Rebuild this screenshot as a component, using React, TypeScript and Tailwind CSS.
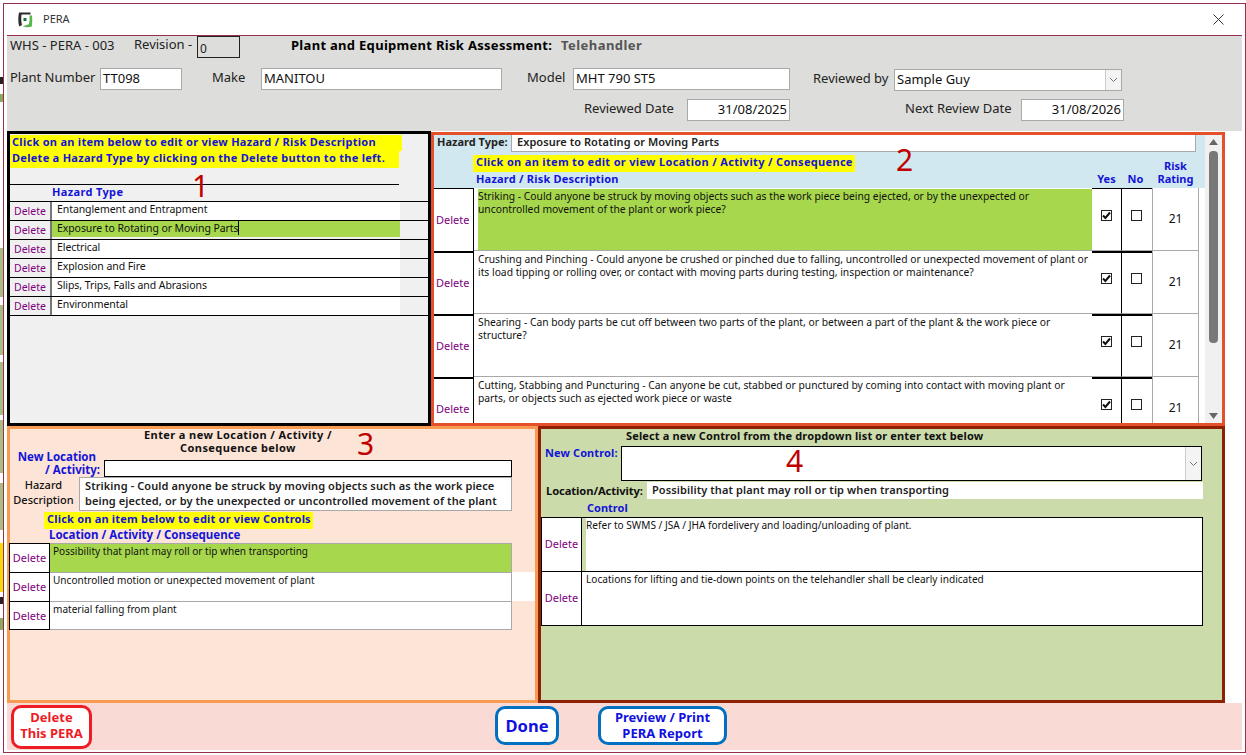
const font = "[font-family:'Noto_Sans',sans-serif]"

const hazards = [
  "Entanglement and Entrapment",
  "Exposure to Rotating or Moving Parts",
  "Electrical",
  "Explosion and Fire",
  "Slips, Trips, Falls and Abrasions",
  "Environmental",
]

const risks = [
  "Striking - Could anyone be struck by moving objects such as the work piece being ejected, or by the unexpected or\nuncontrolled movement of the plant or work piece?",
  "Crushing and Pinching - Could anyone be crushed or pinched due to falling, uncontrolled or unexpected movement of plant or\nits load tipping or rolling over, or contact with moving parts during testing, inspection or maintenance?",
  "Shearing - Can body parts be cut off between two parts of the plant, or between a part of the plant & the work piece or\nstructure?",
  "Cutting, Stabbing and Puncturing - Can anyone be cut, stabbed or punctured by coming into contact with moving plant or\nparts, or objects such as ejected work piece or waste",
]

const locations = [
  "Possibility that plant may roll or tip when transporting",
  "Uncontrolled motion or unexpected movement of plant",
  "material falling from plant",
]

const controls = [
  "Refer to SWMS / JSA / JHA fordelivery and loading/unloading of plant.",
  "Locations for lifting and tie-down points on the telehandler shall be clearly indicated",
]

function Field({ className, children }: { className: string; children?: React.ReactNode }) {
  return (
    <div className={`h-[22px] bg-white border border-[#a9a9a9] flex items-center px-[2px] text-[13px] text-[#111] ${className}`}>
      {children}
    </div>
  )
}

function Chevron() {
  return (
    <svg width="9" height="6" viewBox="0 0 9 6" fill="none" stroke="#777" strokeWidth="1">
      <path d="M1 1l3.5 3.5L8 1" />
    </svg>
  )
}

function Checkbox({ checked }: { checked?: boolean }) {
  return (
    <div className="w-[11px] h-[11px] border border-[#222] bg-white flex items-center justify-center">
      {checked && (
        <svg width="9" height="9" viewBox="0 0 9 9" fill="none" stroke="#111" strokeWidth="2">
          <path d="M1 4.5l2.4 2.5L8 1.5" />
        </svg>
      )}
    </div>
  )
}

function Arrow({ up }: { up?: boolean }) {
  return (
    <svg width="9" height="6" viewBox="0 0 9 6" fill="#666">
      <path d={up ? "M4.5 0L9 6H0z" : "M0 0h9L4.5 6z"} />
    </svg>
  )
}

export default function App() {
  return (
    <div className={`relative w-[1246px] h-[755px] overflow-hidden bg-white text-[#111] ${font}`}>
      <div className="flex">
        {/* bits of the window behind */}
        <div className="w-[3px] h-[755px] flex flex-col shrink-0">
          <div className="h-[77px]" />
          <div className="h-[7px] bg-[#222]" />
          <div className="h-[8px] bg-[#8aa860] mt-[10px]" />
          <div className="h-[146px]" />
          <div className="h-[49px] bg-[#a8bd84]" />
          <div className="h-[50px] bg-[#a8bd84] mt-[8px]" />
          <div className="h-[53px] bg-[#a8bd84] mt-[7px]" />
          <div className="h-[53px] bg-[#a8bd84] mt-[5px]" />
          <div className="h-[47px] bg-[#a8bd84] mt-[10px]" />
          <div className="h-[49px] bg-[#f5d90a] mt-[13px]" />
          <div className="h-[7px] bg-[#222] mt-[5px]" />
          <div className="h-[12px] bg-[#8aa860] mt-[14px]" />
        </div>

        <div className="mt-[3px] w-[1243px] h-[750px] border border-[#96304a] pr-[3px] pl-[3px]">
          {/* title bar */}
          <div className="h-[32px] border-b border-[#96304a] flex items-center pl-[10px] pr-[18px] pb-[1px]">
            <svg width="16" height="17" viewBox="0 0 16 17">
              <path d="M2 1.500H13.500V3.500H4.500C4 7 4.200 11 5 14L2.200 15.500C1 11 1 6 2 1.500z" fill="#2b2b2b" />
              <path d="M12.500 4.500H15C15.400 8 15.300 11.500 14.800 15.500 11.500 16.500 8.500 16.300 5.800 15.200L11.800 13.300C12.600 10.500 12.700 7.500 12.500 4.500z" fill="#56b84a" />
              <rect x="6.500" y="7" width="3" height="3" fill="#1f6b4a" />
            </svg>
            <span className="ml-[10px] text-[11px] text-[#333]">PERA</span>
            <svg className="ml-auto" width="11" height="11" viewBox="0 0 11 11" stroke="#333" strokeWidth="1">
              <path d="M.5.5l10 10M10.500.5l-10 10" />
            </svg>
          </div>

          {/* record header */}
          <div className="h-[95px] bg-[#dddddb] pl-[3px] text-[13px] text-[#222]">
            <div className="flex items-center h-[22px]">
              <span className="w-[124px] -mt-[3px]">WHS - PERA - 003</span>
              <span className="w-[63px] -mt-[5px]">Revision -</span>
              <div className="w-[43px] h-[22px] border border-[#222] pl-[2px] text-[12px] leading-[24px]">0</div>
              <span className="ml-[51px] w-[270px] font-bold text-[13px] tracking-[0.3px] text-black -mt-[3px]">Plant and Equipment Risk Assessment:</span>
              <span className="font-bold text-[13px] tracking-[0.45px] text-[#555] -mt-[3px]">Telehandler</span>
            </div>
            <div className="flex items-center mt-[10px]">
              <span className="w-[90px] -mt-[3px]">Plant Number</span>
              <Field className="w-[82px]">TT098</Field>
              <span className="ml-[30px] w-[49px] -mt-[3px]">Make</span>
              <Field className="w-[241px]">MANITOU</Field>
              <span className="ml-[25px] w-[46px] -mt-[3px]">Model</span>
              <Field className="w-[217px]">MHT 790 ST5</Field>
              <span className="ml-[23px] w-[81px] -mt-[1px]">Reviewed by</span>
              <Field className="w-[228px] !pr-0 justify-between translate-y-[1px]">
                Sample Guy
                <div className="w-[16px] h-[20px] bg-[#f4f4f4] border-l border-[#ccc] flex items-center justify-center">
                  <Chevron />
                </div>
              </Field>
            </div>
            <div className="flex items-center mt-[9px] pl-[574px]">
              <span className="w-[103px] -mt-[2px]">Reviewed Date</span>
              <Field className="w-[103px] justify-end">31/08/2025</Field>
              <span className="ml-[115px] w-[116px] -mt-[2px]">Next Review Date</span>
              <Field className="w-[103px] justify-end">31/08/2026</Field>
            </div>
          </div>

          {/* hazard types and hazard descriptions */}
          <div className="flex h-[295px]">
            <div className="relative w-[424px] border-[3px] border-black bg-[#f0f0f0] text-[10.500px]">
              <div className="pt-[1px] font-bold text-[#1414d8] text-[11px] tracking-[0.28px]">
                <div className="w-[392px] h-[16px] bg-[#ffff00] pl-[2px] leading-[14px] whitespace-nowrap">Click on an item below to edit or view Hazard / Risk Description</div>
                <div className="w-[389px] h-[17px] bg-[#ffff00] pl-[2px] leading-[14px] whitespace-nowrap">Delete a Hazard Type by clicking on the Delete button to the left.</div>
              </div>
              <div className="w-[389px] mt-[16px] border-t border-black" />
              <div className="h-[16px] pl-[42px] font-bold text-[11px] tracking-[0.35px] text-[#1414d8] leading-[14px]">Hazard Type</div>
              <div className="border-t border-black">
                {hazards.map((hazard, index) => (
                  <div key={index} className="flex h-[19px] border-b border-black">
                    <div className="w-[42px] bg-[#f0f0f0] border-r-2 border-[#777] flex items-center justify-center text-[#800080] pt-[2px]">Delete</div>
                    <div className={`w-[348px] pl-[5px] leading-[14px] tracking-[-0.08px] ${index === 1 ? "bg-[#a6d74c] h-[16px]" : "bg-white"}`}>
                      {hazard}
                      {index === 1 && <span className="border-r border-black" />}
                    </div>
                  </div>
                ))}
              </div>
              <span className="absolute left-[182px] top-[37px] text-[30px] leading-[30px] text-[#c00000]">1</span>
            </div>

            <div className="relative w-[794px] h-[294px] mt-[1px] border-[3px] border-[#e4502a] flex bg-white text-[10.300px]">
              <div className="w-[771px] h-full overflow-hidden">
                <div className="bg-[#d2e8f0] h-[53px]">
                  <div className="flex h-[19px]">
                    <span className="w-[77px] pl-[3px] font-bold text-[11px] leading-[13px] text-[#222] whitespace-nowrap">Hazard Type:</span>
                    <div className="w-[685px] h-[18px] bg-white border-b border-r border-l border-[#a9a9a9] pl-[5px] font-semibold text-[11px] tracking-[0.05px] leading-[15px] -mt-[1px] text-[#222]">Exposure to Rotating or Moving Parts</div>
                  </div>
                  <div className="flex items-end h-[33px] font-bold text-[11px] text-[#1414d8]">
                    <div className="w-[658px] pl-[39px]">
                      <div className="w-[382px] h-[17px] bg-[#ffff00] pl-[3px] leading-[14px] tracking-[0.32px] whitespace-nowrap">Click on an item to edit or view Location / Activity / Consequence</div>
                      <div className="pl-[3px] h-[15px] leading-[14px] tracking-[0.2px]">Hazard / Risk Description</div>
                    </div>
                    <div className="w-[29px] text-center h-[15px] leading-[14px]">Yes</div>
                    <div className="w-[29px] text-center h-[15px] leading-[14px]">No</div>
                    <div className="w-[51px] text-center leading-[13px] pb-[2px]">Risk<br />Rating</div>
                  </div>
                </div>
                {risks.map((risk, index) => (
                  <div key={index} className="flex h-[63px]">
                    <div className={`w-[40px] bg-white border-r border-black flex items-center pl-[2px] text-[11px] text-[#800080] ${index === 0 ? "border-t border-black" : "border-t-2 border-black"}`}>Delete</div>
                    <div className="w-[618px] border-b border-[#a9a9a9] pl-[4px] pt-[1px]">
                      <div className={`h-full leading-[13px] pt-[1px] whitespace-pre-line ${index === 0 ? "bg-[#a6d74c]" : ""}`}>{risk}</div>
                    </div>
                    <div className={`w-[30px] border-b border-[#a9a9a9] border-r border-r-black flex justify-center ${index === 0 ? "border-t border-t-black pt-[21px]" : "border-t-2 border-t-black pt-[20px]"}`}>
                      <Checkbox checked />
                    </div>
                    <div className={`w-[30px] border-b border-[#a9a9a9] flex justify-center pr-[2px] ${index === 0 ? "border-t border-t-black pt-[21px]" : "border-t-2 border-t-black pt-[20px]"}`}>
                      <Checkbox />
                    </div>
                    <div className="w-[47px] border-x border-b border-[#a9a9a9] flex items-center justify-center text-[12px]">21</div>
                  </div>
                ))}
              </div>
              {/* scrollbar */}
              <div className="w-[17px] bg-[#f0f0f0] flex flex-col items-center py-[4px]">
                <Arrow up />
                <div className="w-[9px] h-[192px] bg-[#787878] rounded-[4px] mt-[6px]" />
                <div className="mt-auto"><Arrow /></div>
              </div>
              <span className="absolute left-[462px] top-[10px] text-[30px] leading-[30px] text-[#c00000]">2</span>
            </div>
          </div>

          {/* locations and controls */}
          <div className="flex h-[277px]">
            <div className="relative w-[531px] border-[3px] border-[#f79a52] bg-[#fce4d6] text-[10px]">
              <div className="w-[456px] h-[21px] -mt-[1px] mb-[1px] text-center font-bold text-[11px] tracking-[0.4px] leading-[13px] text-[#111]">
                Enter a new Location / Activity /<br />Consequence below
              </div>
              <div className="flex h-[27px]">
                <div className="w-[90px] text-right font-bold text-[#1414d8] text-[11.500px] leading-[13px] whitespace-nowrap">
                  <span className="pr-[4px]">New Location</span><br />/ Activity:
                </div>
                <div className="ml-[4px] w-[408px] h-[17px] self-end border border-black bg-white" />
              </div>
              <div className="flex h-[34px]">
                <div className="w-[67px] mr-[2px] text-center text-[11px] leading-[15px] font-medium">Hazard<br />Description</div>
                <div className="w-[433px] border border-[#a9a9a9] bg-white pl-[5px] font-semibold text-[11px] tracking-[0.1px] leading-[15px] text-[#222] whitespace-nowrap">
                  Striking - Could anyone be struck by moving objects such as the work piece<br />being ejected, or by the unexpected or uncontrolled movement of the plant
                </div>
              </div>
              <div className="ml-[34px] mt-[1px] w-[269px] h-[17px] bg-[#ffff00] pl-[3px] font-bold text-[#1414d8] text-[11px] leading-[14px] tracking-[0.2px] whitespace-nowrap">Click on an item below to edit or view Controls</div>
              <div className="h-[14px] pl-[39px] font-bold text-[#1414d8] text-[11.500px] leading-[11px] whitespace-nowrap">Location / Activity / Consequence</div>
              <div className="-ml-[1px]">
                {locations.map((location, index) => (
                  <div key={index} className="flex h-[29px]">
                    <div className={`w-[41px] border-l border-r border-black bg-white flex items-center justify-center text-[11px] text-[#800080] border-t ${index === 2 ? "border-b pt-[1px]" : ""}`}>Delete</div>
                    <div className={`w-[462px] border-t border-r border-[#a9a9a9] pl-[3px] leading-[14px] tracking-[0.03px] ${index === 0 ? "bg-[#a6d74c]" : "bg-white"} ${index === 2 ? "border-b" : ""}`}>{location}</div>
                    {index === 1 && <div className="w-[23px] bg-white" />}
                  </div>
                ))}
              </div>
              <span className="absolute left-[347px] top-[0px] text-[30px] leading-[30px] text-[#c00000]">3</span>
            </div>

            <div className="relative w-[687px] border-[3px] border-[#8f2100] bg-[#ccdbaa] text-[10.100px]">
              <div className="h-[14px] pl-[85px] font-bold text-[11px] tracking-[0.13px] leading-[13px] whitespace-nowrap">Select a new Control from the dropdown list or enter text below</div>
              <div className="flex mt-[3px]">
                <div className="w-[80px] pl-[4px] font-bold text-[#1414d8] text-[11px] tracking-[0.1px] leading-[14px] whitespace-nowrap">New Control:</div>
                <div className="w-[581px] h-[35px] border border-black bg-white flex justify-end">
                  <div className="w-[16px] bg-[#f4f4f4] border-l border-[#ccc] flex items-center justify-center">
                    <Chevron />
                  </div>
                </div>
              </div>
              <div className="flex mt-[1px]">
                <div className="w-[106px] pl-[5px] font-bold text-[11.200px] tracking-[-0.1px] leading-[17px] whitespace-nowrap">Location/Activity:</div>
                <div className="w-[556px] h-[17px] bg-white pl-[5px] font-semibold text-[11px] tracking-[0.1px] leading-[15px] text-[#222]">Possibility that plant may roll or tip when transporting</div>
              </div>
              <div className="h-[18px] pl-[46px] font-bold text-[11px] text-[#1414d8] leading-[18px]">Control</div>
              <div className="w-[662px] border border-black">
                {controls.map((control, index) => (
                  <div key={index} className={`flex ${index === 1 ? "h-[54px] border-t border-black" : "h-[53px]"}`}>
                    <div className="w-[40px] border-r border-black bg-white flex items-center justify-center text-[11px] text-[#800080]">Delete</div>
                    <div className={`flex-1 pl-[4px] leading-[14px] bg-white ${index === 0 ? "border-l-[4px] border-l-[#ccdbaa] !pl-0" : ""}`}>{control}</div>
                  </div>
                ))}
              </div>
              <span className="absolute left-[245px] top-[17px] text-[30px] leading-[30px] text-[#c00000]">4</span>
            </div>
          </div>

          {/* footer buttons */}
          <div className="h-[47px] bg-[#f9dad5] flex items-center pl-[4px] font-bold text-[13px] leading-[16px] text-center">
            <div className="w-[81px] h-[44px] rounded-[10px] border-[3px] border-[#ee1c25] bg-white text-[#ee1c25] flex items-center justify-center pb-[3px]">
              Delete<br />This PERA
            </div>
            <div className="ml-[403px] w-[64px] h-[39px] rounded-[10px] border-[3px] border-[#0070c0] bg-white text-[#1010e0] text-[16.500px] flex items-center justify-center -mt-[2px]">
              Done
            </div>
            <div className="ml-[39px] w-[129px] h-[39px] rounded-[10px] border-[3px] border-[#0070c0] bg-white text-[#1010e0] flex items-center justify-center -mt-[2px] pb-[1px]">
              Preview / Print<br />PERA Report
            </div>
          </div>
        </div>
      </div>
    </div>
  )
}
